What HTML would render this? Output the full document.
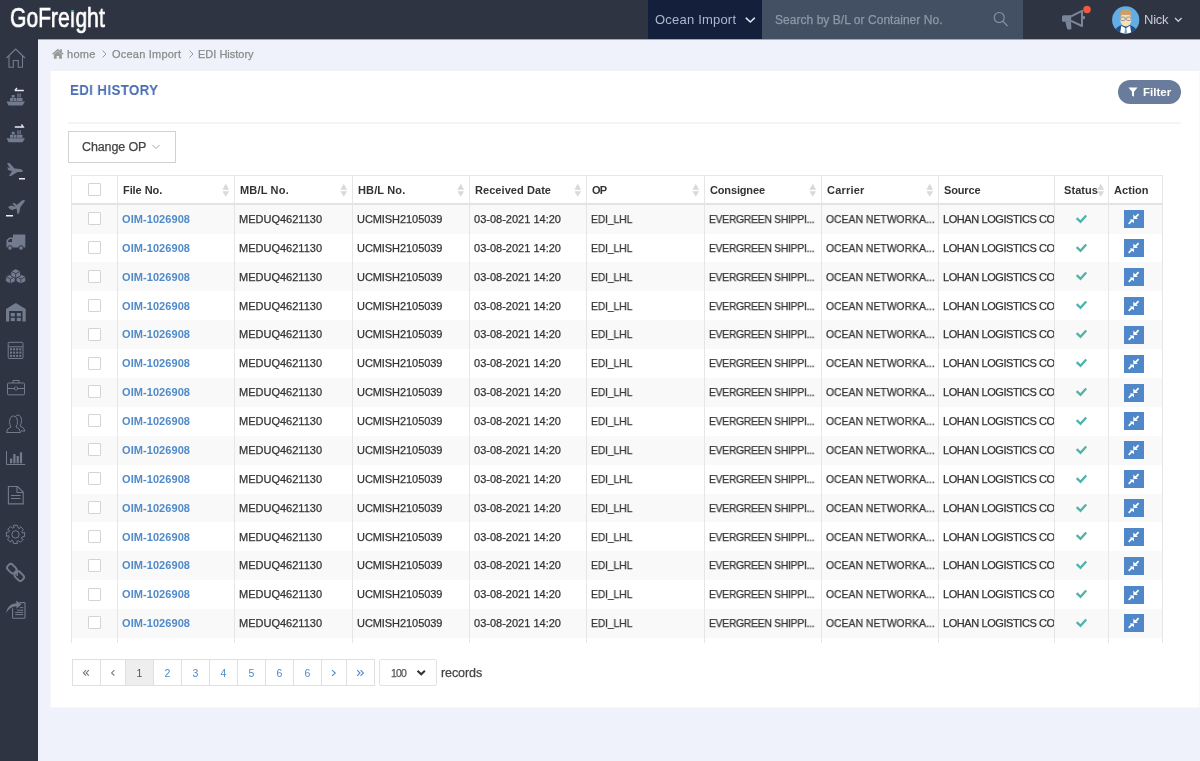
<!DOCTYPE html>
<html><head><meta charset="utf-8">
<style>
*{box-sizing:border-box;margin:0;padding:0}
html,body{width:1200px;height:761px;overflow:hidden;background:#eff2fa;font-family:"Liberation Sans",sans-serif;color:#333}
.a{position:absolute}
.x{position:absolute;white-space:pre;line-height:normal;will-change:transform}
</style></head><body>

<div class="a" style="left:0;top:0;width:1200px;height:39px;background:#2e3442"></div>
<div class="a" style="left:0;top:39px;width:38px;height:722px;background:#2e3442"></div>
<div class="a" style="left:38px;top:39px;width:1162px;height:1px;background:#a3a8b4"></div>
<div class="x" style="left:10px;top:2.3px;font-size:27.5px;color:#fff;transform:scaleX(0.765);transform-origin:0 0;letter-spacing:0px;-webkit-text-stroke:0.7px #fff">GoFre&#305;ght</div>
<div class="a" style="left:71.3px;top:9.6px;width:2.6px;height:2.6px;border-radius:2px;background:#3cc0b0"></div>
<div class="a" style="left:648px;top:0;width:114px;height:39px;background:#131f3b"></div>
<div class="a" style="left:762px;top:0;width:261px;height:39px;background:#434f63"></div>
<svg class="a" style="left:740px;top:10.5px" width="20" height="20"><path d="M6.2 7.2 L10.3 11 L14.4 7.2" fill="none" stroke="#dfe3ea" stroke-width="1.6" stroke-linecap="round"/></svg>
<svg class="a" style="left:1170px;top:10px" width="16" height="16"><path d="M5 8 L8.3 11.3 L11.6 8" fill="none" stroke="#c8cdd8" stroke-width="1.3"/></svg>
<svg class="a" style="left:990px;top:8px" width="22" height="22"><circle cx="9.2" cy="9.5" r="5" fill="none" stroke="#8b95a6" stroke-width="1.1"/><path d="M12.8 13.1 L17.5 18" stroke="#8b95a6" stroke-width="1.1"/></svg>
<svg class="a" style="left:1058px;top:4px" width="34" height="30"><path d="M5.5 11.3 H13.2 V17.7 H5.5 Q4 17.7 4 16.2 V12.8 Q4 11.3 5.5 11.3 Z" fill="#7b8598"/><path d="M7.3 17.5 H13 L13.4 24.3 Q13.5 25.6 12.3 25.6 H10.2 Q9.2 25.6 9 24.6 Z" fill="#7b8598"/><path d="M13 12.3 L24 6.8 V22 L13 16.8" fill="none" stroke="#7b8598" stroke-width="2" stroke-linejoin="round"/><rect x="24.5" y="12" width="2.5" height="3.2" rx="1" fill="#7b8598"/><circle cx="29" cy="5.5" r="3.8" fill="#ee5a3b"/></svg>
<svg class="a" style="left:1111px;top:5px" width="30" height="30" viewBox="0 0 30 30"><defs><clipPath id="cc"><circle cx="14.7" cy="14.9" r="13.6"/></clipPath></defs><circle cx="14.7" cy="14.9" r="13.6" fill="#62ade6"/><g clip-path="url(#cc)"><path d="M2 30 Q4 22.3 10 20.3 L19.5 20.3 Q25.5 22.3 27.5 30 Z" fill="#1d4f8c"/><path d="M8.8 30 L10.3 20.8 L14.7 23.3 L19.1 20.8 L20.6 30 Z" fill="#ffffff"/><path d="M14 23 H15.4 L16.1 30 H13.3 Z" fill="#5aa6df"/><ellipse cx="14.8" cy="14.6" rx="5.6" ry="7" fill="#f8dfb4"/><path d="M8.7 15.5 Q7.6 3.8 14.8 4 Q22 3.8 20.9 15.5 Q20.6 11 19.6 9.6 Q15 10.6 10 9.6 Q9 11 8.7 15.5 Z" fill="#c9a06a"/><rect x="9.6" y="12.1" width="4.5" height="3.4" rx="1.2" fill="none" stroke="#8b9099" stroke-width="0.95"/><rect x="15.5" y="12.1" width="4.5" height="3.4" rx="1.2" fill="none" stroke="#8b9099" stroke-width="0.95"/><path d="M14 13.4 H15.6" stroke="#8b9099" stroke-width="0.8"/></g></svg>
<svg class="a" style="left:51px;top:47px" width="15" height="14" viewBox="0 0 15 14"><path d="M1.6 7.3 L6.9 2.7 L12.2 7.3" fill="none" stroke="#999" stroke-width="1.5"/><path d="M2.9 7.4 L6.9 4.1 L10.9 7.4 V11.7 H8.1 V9.1 H5.7 V11.7 H2.9 Z" fill="#999"/><rect x="9.2" y="2.2" width="1.7" height="3.2" fill="#999"/></svg>
<svg class="a" style="left:101px;top:49px" width="7" height="10"><path d="M1.5 1.5 L5 5 L1.5 8.5" fill="none" stroke="#999" stroke-width="1"/></svg>
<svg class="a" style="left:187.5px;top:49px" width="7" height="10"><path d="M1.5 1.5 L5 5 L1.5 8.5" fill="none" stroke="#999" stroke-width="1"/></svg>
<div class="a" style="left:50px;top:71px;width:1150px;height:637px;background:#f7f8fc"></div>
<div class="a" style="left:51px;top:71px;width:1148px;height:636px;background:#fff"></div>
<div class="a" style="left:1118px;top:80px;width:63px;height:24px;border-radius:12px;background:#6a7c9b"></div>
<svg class="a" style="left:1127px;top:86px" width="12" height="12"><path d="M1.5 1.5 H10.5 L7 5.8 V10.8 L5 9.6 V5.8 Z" fill="#fff"/></svg>
<div class="a" style="left:68px;top:122px;width:1113px;height:2px;background:#f4f4f4"></div>
<div class="a" style="left:68px;top:131px;width:108px;height:32px;border:1px solid #d2d2d2"></div>
<svg class="a" style="left:151px;top:143px" width="10" height="8"><path d="M1.5 2 L5 5.5 L8.5 2" fill="none" stroke="#9a9a9a" stroke-width="0.9"/></svg>
<div class="a" style="left:71px;top:205px;width:1091px;height:29px;background:#f9f9f9"></div>
<div class="a" style="left:71px;top:234px;width:1091px;height:28px;background:#ffffff"></div>
<div class="a" style="left:71px;top:262px;width:1091px;height:29px;background:#f9f9f9"></div>
<div class="a" style="left:71px;top:291px;width:1091px;height:29px;background:#ffffff"></div>
<div class="a" style="left:71px;top:320px;width:1091px;height:29px;background:#f9f9f9"></div>
<div class="a" style="left:71px;top:349px;width:1091px;height:29px;background:#ffffff"></div>
<div class="a" style="left:71px;top:378px;width:1091px;height:29px;background:#f9f9f9"></div>
<div class="a" style="left:71px;top:407px;width:1091px;height:29px;background:#ffffff"></div>
<div class="a" style="left:71px;top:436px;width:1091px;height:29px;background:#f9f9f9"></div>
<div class="a" style="left:71px;top:465px;width:1091px;height:29px;background:#ffffff"></div>
<div class="a" style="left:71px;top:494px;width:1091px;height:28px;background:#f9f9f9"></div>
<div class="a" style="left:71px;top:522px;width:1091px;height:29px;background:#ffffff"></div>
<div class="a" style="left:71px;top:551px;width:1091px;height:29px;background:#f9f9f9"></div>
<div class="a" style="left:71px;top:580px;width:1091px;height:29px;background:#ffffff"></div>
<div class="a" style="left:71px;top:609px;width:1091px;height:29px;background:#f9f9f9"></div>
<div class="a" style="left:71px;top:638px;width:1091px;height:5px;background:#ffffff"></div>
<div class="a" style="left:71px;top:175px;width:1092px;height:1px;background:#e8e8e8"></div>
<div class="a" style="left:71px;top:203px;width:1092px;height:2px;background:#e3e3e3"></div>
<div class="a" style="left:71px;top:175px;width:1px;height:468px;background:#e6e6e6"></div>
<div class="a" style="left:117px;top:175px;width:1px;height:468px;background:#e6e6e6"></div>
<div class="a" style="left:234px;top:175px;width:1px;height:468px;background:#e6e6e6"></div>
<div class="a" style="left:352px;top:175px;width:1px;height:468px;background:#e6e6e6"></div>
<div class="a" style="left:469px;top:175px;width:1px;height:468px;background:#e6e6e6"></div>
<div class="a" style="left:586px;top:175px;width:1px;height:468px;background:#e6e6e6"></div>
<div class="a" style="left:704px;top:175px;width:1px;height:468px;background:#e6e6e6"></div>
<div class="a" style="left:821px;top:175px;width:1px;height:468px;background:#e6e6e6"></div>
<div class="a" style="left:938px;top:175px;width:1px;height:468px;background:#e6e6e6"></div>
<div class="a" style="left:1054px;top:175px;width:1px;height:468px;background:#e6e6e6"></div>
<div class="a" style="left:1108px;top:175px;width:1px;height:468px;background:#e6e6e6"></div>
<div class="a" style="left:1162px;top:175px;width:1px;height:468px;background:#e6e6e6"></div>
<div class="a" style="left:88px;top:183px;width:13px;height:13px;border:1px solid #d4d4d4;border-radius:1px;background:#fff"></div>
<div class="a" style="left:88px;top:212px;width:13px;height:13px;border:1px solid #d4d4d4;border-radius:1px;background:#fff"></div>
<div class="a" style="left:88px;top:241px;width:13px;height:13px;border:1px solid #d4d4d4;border-radius:1px;background:#fff"></div>
<div class="a" style="left:88px;top:270px;width:13px;height:13px;border:1px solid #d4d4d4;border-radius:1px;background:#fff"></div>
<div class="a" style="left:88px;top:299px;width:13px;height:13px;border:1px solid #d4d4d4;border-radius:1px;background:#fff"></div>
<div class="a" style="left:88px;top:328px;width:13px;height:13px;border:1px solid #d4d4d4;border-radius:1px;background:#fff"></div>
<div class="a" style="left:88px;top:357px;width:13px;height:13px;border:1px solid #d4d4d4;border-radius:1px;background:#fff"></div>
<div class="a" style="left:88px;top:385px;width:13px;height:13px;border:1px solid #d4d4d4;border-radius:1px;background:#fff"></div>
<div class="a" style="left:88px;top:414px;width:13px;height:13px;border:1px solid #d4d4d4;border-radius:1px;background:#fff"></div>
<div class="a" style="left:88px;top:443px;width:13px;height:13px;border:1px solid #d4d4d4;border-radius:1px;background:#fff"></div>
<div class="a" style="left:88px;top:472px;width:13px;height:13px;border:1px solid #d4d4d4;border-radius:1px;background:#fff"></div>
<div class="a" style="left:88px;top:501px;width:13px;height:13px;border:1px solid #d4d4d4;border-radius:1px;background:#fff"></div>
<div class="a" style="left:88px;top:530px;width:13px;height:13px;border:1px solid #d4d4d4;border-radius:1px;background:#fff"></div>
<div class="a" style="left:88px;top:559px;width:13px;height:13px;border:1px solid #d4d4d4;border-radius:1px;background:#fff"></div>
<div class="a" style="left:88px;top:588px;width:13px;height:13px;border:1px solid #d4d4d4;border-radius:1px;background:#fff"></div>
<div class="a" style="left:88px;top:616px;width:13px;height:13px;border:1px solid #d4d4d4;border-radius:1px;background:#fff"></div>
<svg class="a" style="left:222.0px;top:183px" width="8" height="15"><path d="M0.4 6.8 L3.75 0.8 L7.1 6.8 Z M0.4 8.2 H7.1 L3.75 13.8 Z" fill="#d9d9d9"/></svg>
<svg class="a" style="left:340.0px;top:183px" width="8" height="15"><path d="M0.4 6.8 L3.75 0.8 L7.1 6.8 Z M0.4 8.2 H7.1 L3.75 13.8 Z" fill="#d9d9d9"/></svg>
<svg class="a" style="left:457.0px;top:183px" width="8" height="15"><path d="M0.4 6.8 L3.75 0.8 L7.1 6.8 Z M0.4 8.2 H7.1 L3.75 13.8 Z" fill="#d9d9d9"/></svg>
<svg class="a" style="left:574.0px;top:183px" width="8" height="15"><path d="M0.4 6.8 L3.75 0.8 L7.1 6.8 Z M0.4 8.2 H7.1 L3.75 13.8 Z" fill="#d9d9d9"/></svg>
<svg class="a" style="left:692.0px;top:183px" width="8" height="15"><path d="M0.4 6.8 L3.75 0.8 L7.1 6.8 Z M0.4 8.2 H7.1 L3.75 13.8 Z" fill="#d9d9d9"/></svg>
<svg class="a" style="left:809.0px;top:183px" width="8" height="15"><path d="M0.4 6.8 L3.75 0.8 L7.1 6.8 Z M0.4 8.2 H7.1 L3.75 13.8 Z" fill="#d9d9d9"/></svg>
<svg class="a" style="left:926.0px;top:183px" width="8" height="15"><path d="M0.4 6.8 L3.75 0.8 L7.1 6.8 Z M0.4 8.2 H7.1 L3.75 13.8 Z" fill="#d9d9d9"/></svg>
<svg class="a" style="left:1096.5px;top:183px" width="8" height="15"><path d="M0.4 6.8 L3.75 0.8 L7.1 6.8 Z M0.4 8.2 H7.1 L3.75 13.8 Z" fill="#d9d9d9"/></svg>
<svg class="a" style="left:1074px;top:211px" width="15" height="14"><path d="M2.7 7.2 L6.5 10.8 L12.2 4.5" fill="none" stroke="#4fb3aa" stroke-width="2.3"/></svg>
<div class="a" style="left:1124px;top:210px;width:20px;height:18px;background:#5087c9"></div>
<svg class="a" style="left:1124px;top:210px" width="20" height="18"><path d="M14.6 4.2 L11 7.8" stroke="#fff" stroke-width="1.7"/><path d="M9.3 9.1 V4.6 L13.9 9.1 Z" fill="#fff"/><path d="M4.7 13.8 L8.3 10.2" stroke="#fff" stroke-width="1.7"/><path d="M10 9.4 V13.2 L5.6 9.4 Z" fill="#fff"/></svg>
<svg class="a" style="left:1074px;top:240px" width="15" height="14"><path d="M2.7 7.2 L6.5 10.8 L12.2 4.5" fill="none" stroke="#4fb3aa" stroke-width="2.3"/></svg>
<div class="a" style="left:1124px;top:239px;width:20px;height:18px;background:#5087c9"></div>
<svg class="a" style="left:1124px;top:239px" width="20" height="18"><path d="M14.6 4.2 L11 7.8" stroke="#fff" stroke-width="1.7"/><path d="M9.3 9.1 V4.6 L13.9 9.1 Z" fill="#fff"/><path d="M4.7 13.8 L8.3 10.2" stroke="#fff" stroke-width="1.7"/><path d="M10 9.4 V13.2 L5.6 9.4 Z" fill="#fff"/></svg>
<svg class="a" style="left:1074px;top:268px" width="15" height="14"><path d="M2.7 7.2 L6.5 10.8 L12.2 4.5" fill="none" stroke="#4fb3aa" stroke-width="2.3"/></svg>
<div class="a" style="left:1124px;top:268px;width:20px;height:18px;background:#5087c9"></div>
<svg class="a" style="left:1124px;top:268px" width="20" height="18"><path d="M14.6 4.2 L11 7.8" stroke="#fff" stroke-width="1.7"/><path d="M9.3 9.1 V4.6 L13.9 9.1 Z" fill="#fff"/><path d="M4.7 13.8 L8.3 10.2" stroke="#fff" stroke-width="1.7"/><path d="M10 9.4 V13.2 L5.6 9.4 Z" fill="#fff"/></svg>
<svg class="a" style="left:1074px;top:297px" width="15" height="14"><path d="M2.7 7.2 L6.5 10.8 L12.2 4.5" fill="none" stroke="#4fb3aa" stroke-width="2.3"/></svg>
<div class="a" style="left:1124px;top:297px;width:20px;height:18px;background:#5087c9"></div>
<svg class="a" style="left:1124px;top:297px" width="20" height="18"><path d="M14.6 4.2 L11 7.8" stroke="#fff" stroke-width="1.7"/><path d="M9.3 9.1 V4.6 L13.9 9.1 Z" fill="#fff"/><path d="M4.7 13.8 L8.3 10.2" stroke="#fff" stroke-width="1.7"/><path d="M10 9.4 V13.2 L5.6 9.4 Z" fill="#fff"/></svg>
<svg class="a" style="left:1074px;top:326px" width="15" height="14"><path d="M2.7 7.2 L6.5 10.8 L12.2 4.5" fill="none" stroke="#4fb3aa" stroke-width="2.3"/></svg>
<div class="a" style="left:1124px;top:326px;width:20px;height:18px;background:#5087c9"></div>
<svg class="a" style="left:1124px;top:326px" width="20" height="18"><path d="M14.6 4.2 L11 7.8" stroke="#fff" stroke-width="1.7"/><path d="M9.3 9.1 V4.6 L13.9 9.1 Z" fill="#fff"/><path d="M4.7 13.8 L8.3 10.2" stroke="#fff" stroke-width="1.7"/><path d="M10 9.4 V13.2 L5.6 9.4 Z" fill="#fff"/></svg>
<svg class="a" style="left:1074px;top:355px" width="15" height="14"><path d="M2.7 7.2 L6.5 10.8 L12.2 4.5" fill="none" stroke="#4fb3aa" stroke-width="2.3"/></svg>
<div class="a" style="left:1124px;top:355px;width:20px;height:18px;background:#5087c9"></div>
<svg class="a" style="left:1124px;top:355px" width="20" height="18"><path d="M14.6 4.2 L11 7.8" stroke="#fff" stroke-width="1.7"/><path d="M9.3 9.1 V4.6 L13.9 9.1 Z" fill="#fff"/><path d="M4.7 13.8 L8.3 10.2" stroke="#fff" stroke-width="1.7"/><path d="M10 9.4 V13.2 L5.6 9.4 Z" fill="#fff"/></svg>
<svg class="a" style="left:1074px;top:384px" width="15" height="14"><path d="M2.7 7.2 L6.5 10.8 L12.2 4.5" fill="none" stroke="#4fb3aa" stroke-width="2.3"/></svg>
<div class="a" style="left:1124px;top:384px;width:20px;height:18px;background:#5087c9"></div>
<svg class="a" style="left:1124px;top:384px" width="20" height="18"><path d="M14.6 4.2 L11 7.8" stroke="#fff" stroke-width="1.7"/><path d="M9.3 9.1 V4.6 L13.9 9.1 Z" fill="#fff"/><path d="M4.7 13.8 L8.3 10.2" stroke="#fff" stroke-width="1.7"/><path d="M10 9.4 V13.2 L5.6 9.4 Z" fill="#fff"/></svg>
<svg class="a" style="left:1074px;top:413px" width="15" height="14"><path d="M2.7 7.2 L6.5 10.8 L12.2 4.5" fill="none" stroke="#4fb3aa" stroke-width="2.3"/></svg>
<div class="a" style="left:1124px;top:412px;width:20px;height:18px;background:#5087c9"></div>
<svg class="a" style="left:1124px;top:412px" width="20" height="18"><path d="M14.6 4.2 L11 7.8" stroke="#fff" stroke-width="1.7"/><path d="M9.3 9.1 V4.6 L13.9 9.1 Z" fill="#fff"/><path d="M4.7 13.8 L8.3 10.2" stroke="#fff" stroke-width="1.7"/><path d="M10 9.4 V13.2 L5.6 9.4 Z" fill="#fff"/></svg>
<svg class="a" style="left:1074px;top:442px" width="15" height="14"><path d="M2.7 7.2 L6.5 10.8 L12.2 4.5" fill="none" stroke="#4fb3aa" stroke-width="2.3"/></svg>
<div class="a" style="left:1124px;top:441px;width:20px;height:18px;background:#5087c9"></div>
<svg class="a" style="left:1124px;top:441px" width="20" height="18"><path d="M14.6 4.2 L11 7.8" stroke="#fff" stroke-width="1.7"/><path d="M9.3 9.1 V4.6 L13.9 9.1 Z" fill="#fff"/><path d="M4.7 13.8 L8.3 10.2" stroke="#fff" stroke-width="1.7"/><path d="M10 9.4 V13.2 L5.6 9.4 Z" fill="#fff"/></svg>
<svg class="a" style="left:1074px;top:471px" width="15" height="14"><path d="M2.7 7.2 L6.5 10.8 L12.2 4.5" fill="none" stroke="#4fb3aa" stroke-width="2.3"/></svg>
<div class="a" style="left:1124px;top:470px;width:20px;height:18px;background:#5087c9"></div>
<svg class="a" style="left:1124px;top:470px" width="20" height="18"><path d="M14.6 4.2 L11 7.8" stroke="#fff" stroke-width="1.7"/><path d="M9.3 9.1 V4.6 L13.9 9.1 Z" fill="#fff"/><path d="M4.7 13.8 L8.3 10.2" stroke="#fff" stroke-width="1.7"/><path d="M10 9.4 V13.2 L5.6 9.4 Z" fill="#fff"/></svg>
<svg class="a" style="left:1074px;top:500px" width="15" height="14"><path d="M2.7 7.2 L6.5 10.8 L12.2 4.5" fill="none" stroke="#4fb3aa" stroke-width="2.3"/></svg>
<div class="a" style="left:1124px;top:499px;width:20px;height:18px;background:#5087c9"></div>
<svg class="a" style="left:1124px;top:499px" width="20" height="18"><path d="M14.6 4.2 L11 7.8" stroke="#fff" stroke-width="1.7"/><path d="M9.3 9.1 V4.6 L13.9 9.1 Z" fill="#fff"/><path d="M4.7 13.8 L8.3 10.2" stroke="#fff" stroke-width="1.7"/><path d="M10 9.4 V13.2 L5.6 9.4 Z" fill="#fff"/></svg>
<svg class="a" style="left:1074px;top:528px" width="15" height="14"><path d="M2.7 7.2 L6.5 10.8 L12.2 4.5" fill="none" stroke="#4fb3aa" stroke-width="2.3"/></svg>
<div class="a" style="left:1124px;top:528px;width:20px;height:18px;background:#5087c9"></div>
<svg class="a" style="left:1124px;top:528px" width="20" height="18"><path d="M14.6 4.2 L11 7.8" stroke="#fff" stroke-width="1.7"/><path d="M9.3 9.1 V4.6 L13.9 9.1 Z" fill="#fff"/><path d="M4.7 13.8 L8.3 10.2" stroke="#fff" stroke-width="1.7"/><path d="M10 9.4 V13.2 L5.6 9.4 Z" fill="#fff"/></svg>
<svg class="a" style="left:1074px;top:557px" width="15" height="14"><path d="M2.7 7.2 L6.5 10.8 L12.2 4.5" fill="none" stroke="#4fb3aa" stroke-width="2.3"/></svg>
<div class="a" style="left:1124px;top:557px;width:20px;height:18px;background:#5087c9"></div>
<svg class="a" style="left:1124px;top:557px" width="20" height="18"><path d="M14.6 4.2 L11 7.8" stroke="#fff" stroke-width="1.7"/><path d="M9.3 9.1 V4.6 L13.9 9.1 Z" fill="#fff"/><path d="M4.7 13.8 L8.3 10.2" stroke="#fff" stroke-width="1.7"/><path d="M10 9.4 V13.2 L5.6 9.4 Z" fill="#fff"/></svg>
<svg class="a" style="left:1074px;top:586px" width="15" height="14"><path d="M2.7 7.2 L6.5 10.8 L12.2 4.5" fill="none" stroke="#4fb3aa" stroke-width="2.3"/></svg>
<div class="a" style="left:1124px;top:586px;width:20px;height:18px;background:#5087c9"></div>
<svg class="a" style="left:1124px;top:586px" width="20" height="18"><path d="M14.6 4.2 L11 7.8" stroke="#fff" stroke-width="1.7"/><path d="M9.3 9.1 V4.6 L13.9 9.1 Z" fill="#fff"/><path d="M4.7 13.8 L8.3 10.2" stroke="#fff" stroke-width="1.7"/><path d="M10 9.4 V13.2 L5.6 9.4 Z" fill="#fff"/></svg>
<svg class="a" style="left:1074px;top:615px" width="15" height="14"><path d="M2.7 7.2 L6.5 10.8 L12.2 4.5" fill="none" stroke="#4fb3aa" stroke-width="2.3"/></svg>
<div class="a" style="left:1124px;top:614px;width:20px;height:18px;background:#5087c9"></div>
<svg class="a" style="left:1124px;top:614px" width="20" height="18"><path d="M14.6 4.2 L11 7.8" stroke="#fff" stroke-width="1.7"/><path d="M9.3 9.1 V4.6 L13.9 9.1 Z" fill="#fff"/><path d="M4.7 13.8 L8.3 10.2" stroke="#fff" stroke-width="1.7"/><path d="M10 9.4 V13.2 L5.6 9.4 Z" fill="#fff"/></svg>
<div class="a" style="left:72px;top:659px;width:29px;height:27px;border:1px solid #e0e0e0;background:#fff"></div>
<div class="a" style="left:100px;top:659px;width:26px;height:27px;border:1px solid #e0e0e0;background:#fff"></div>
<div class="a" style="left:125px;top:659px;width:29px;height:27px;border:1px solid #e0e0e0;background:#eeeeee"></div>
<div class="x" style="left:125px;top:667px;width:29px;text-align:center;font-size:10.5px;color:#555">1</div>
<div class="a" style="left:153px;top:659px;width:29px;height:27px;border:1px solid #e0e0e0;background:#fff"></div>
<div class="x" style="left:153px;top:667px;width:29px;text-align:center;font-size:10.5px;color:#508ac9">2</div>
<div class="a" style="left:181px;top:659px;width:29px;height:27px;border:1px solid #e0e0e0;background:#fff"></div>
<div class="x" style="left:181px;top:667px;width:29px;text-align:center;font-size:10.5px;color:#508ac9">3</div>
<div class="a" style="left:209px;top:659px;width:29px;height:27px;border:1px solid #e0e0e0;background:#fff"></div>
<div class="x" style="left:209px;top:667px;width:29px;text-align:center;font-size:10.5px;color:#508ac9">4</div>
<div class="a" style="left:237px;top:659px;width:29px;height:27px;border:1px solid #e0e0e0;background:#fff"></div>
<div class="x" style="left:237px;top:667px;width:29px;text-align:center;font-size:10.5px;color:#508ac9">5</div>
<div class="a" style="left:265px;top:659px;width:29px;height:27px;border:1px solid #e0e0e0;background:#fff"></div>
<div class="x" style="left:265px;top:667px;width:29px;text-align:center;font-size:10.5px;color:#508ac9">6</div>
<div class="a" style="left:293px;top:659px;width:29px;height:27px;border:1px solid #e0e0e0;background:#fff"></div>
<div class="x" style="left:293px;top:667px;width:29px;text-align:center;font-size:10.5px;color:#508ac9">6</div>
<div class="a" style="left:321px;top:659px;width:26px;height:27px;border:1px solid #e0e0e0;background:#fff"></div>
<div class="a" style="left:346px;top:659px;width:29px;height:27px;border:1px solid #e0e0e0;background:#fff"></div>
<svg class="a" style="left:0;top:650px" width="400" height="40"><path d="M86 20.2 L83.4 22.9 L86 25.6 M88.8 20.2 L86.2 22.9 L88.8 25.6" fill="none" stroke="#777" stroke-width="1.1"/><path d="M114.4 20.2 L111.6 22.9 L114.4 25.6" fill="none" stroke="#777" stroke-width="1.1"/><path d="M332 20.2 L335.3 23 L332 25.8" fill="none" stroke="#508ac9" stroke-width="1.1"/><path d="M357.2 20.2 L360 23 L357.2 25.8 M360.6 20.2 L363.4 23 L360.6 25.8" fill="none" stroke="#508ac9" stroke-width="1.1"/></svg>
<div class="a" style="left:379px;top:659px;width:58px;height:27px;border:1px solid #e3e3e3;border-radius:2px;background:#fff"></div>
<svg class="a" style="left:415px;top:668px" width="12" height="10"><path d="M2.5 2.8 L6.2 6.3 L9.9 2.8" fill="none" stroke="#333" stroke-width="2"/></svg>
<svg class="a" style="left:0;top:0" width="38" height="761"><path d="M6.5 58 L15.7 49 L25 58" fill="none" stroke="#737c8e" stroke-width="1.1"/><path d="M9 56 V67.3 H13.3 V60.5 H18.3 V67.3 H22.5 V56" fill="none" stroke="#737c8e" stroke-width="1.1"/><path d="M14.8 90.5 H23.8 M14.8 90.5 L17 88" fill="none" stroke="#e8eaee" stroke-width="1.3"/><path d="M6.5 101.5 H25 L22.5 105.5 H8.5 Z" fill="#737c8e"/><rect x="10" y="98.0" width="3" height="3" fill="#737c8e"/><rect x="13.5" y="98.0" width="3" height="3" fill="#737c8e"/><rect x="11.7" y="95.0" width="3" height="2.6" fill="#737c8e"/><rect x="17.3" y="93.5" width="1.3" height="4" fill="#737c8e"/><rect x="19.5" y="93.5" width="1.3" height="4" fill="#737c8e"/><rect x="17" y="98.0" width="5.5" height="3" fill="#737c8e"/><path d="M14.8 127 H23.3 L21.5 124.5" fill="none" stroke="#e8eaee" stroke-width="1.3"/><path d="M6.5 138.3 H25 L22.5 142.3 H8.5 Z" fill="#737c8e"/><rect x="10" y="134.8" width="3" height="3" fill="#737c8e"/><rect x="13.5" y="134.8" width="3" height="3" fill="#737c8e"/><rect x="11.7" y="131.8" width="3" height="2.6" fill="#737c8e"/><rect x="17.3" y="130.3" width="1.3" height="4" fill="#737c8e"/><rect x="19.5" y="130.3" width="1.3" height="4" fill="#737c8e"/><rect x="17" y="134.8" width="5.5" height="3" fill="#737c8e"/><path d="M7 163 L9.5 163 L14.5 168.5 L20 169 Q23.5 170 22.5 172 L17.5 172 L11 176 L9 176 L12 171 L8 170 L7.5 167 L10 168.5 Z" fill="#737c8e"/><rect x="19" y="178" width="6" height="1.5" fill="#eceef2"/><path d="M8 207 L11 205.5 L15 206.5 L22 200.5 Q24.5 199.5 25 201 L20.5 207 L19 213.5 L17.5 214 L16.5 208.5 L12 210 Q9.5 209.5 8 207 Z M12 203.5 L14.5 203 L17 205 L15.5 206.5 Z" fill="#737c8e"/><rect x="6" y="215" width="7" height="1.5" fill="#eceef2"/><path d="M13 234.5 H25.3 V247.5 H13 Z" fill="#737c8e"/><path d="M6.5 240 L9.5 237.5 H13 V247.5 H6.5 Z" fill="#737c8e"/><path d="M8 241 L10 239 H12 V242 H8 Z" fill="#2e3442"/><circle cx="10" cy="248" r="2.3" fill="#737c8e" stroke="#2e3442" stroke-width="1"/><circle cx="21" cy="248" r="2.3" fill="#737c8e" stroke="#2e3442" stroke-width="1"/><path d="M10.5 274.2 L15.3 276.6 L15.3 281.4 L10.5 283.8 L5.7 281.4 L5.7 276.6 Z" fill="#737c8e" stroke="#2e3442" stroke-width="0.8"/><path d="M5.7 276.6 L10.5 279 L15.3 276.6 M10.5 279 V283.8" fill="none" stroke="#2e3442" stroke-width="0.8"/><path d="M20.9 274.2 L25.7 276.6 L25.7 281.4 L20.9 283.8 L16.099999999999998 281.4 L16.099999999999998 276.6 Z" fill="#737c8e" stroke="#2e3442" stroke-width="0.8"/><path d="M16.099999999999998 276.6 L20.9 279 L25.7 276.6 M20.9 279 V283.8" fill="none" stroke="#2e3442" stroke-width="0.8"/><path d="M15.7 268.8 L20.5 271.20000000000005 L20.5 276.0 L15.7 278.40000000000003 L10.899999999999999 276.0 L10.899999999999999 271.20000000000005 Z" fill="#737c8e" stroke="#2e3442" stroke-width="0.8"/><path d="M10.899999999999999 271.20000000000005 L15.7 273.6 L20.5 271.20000000000005 M15.7 273.6 V278.40000000000003" fill="none" stroke="#2e3442" stroke-width="0.8"/><path d="M6 309 L15.8 303 L25.7 309 V321.6 H22.5 V311 H9.2 V321.6 H6 Z" fill="#737c8e"/><rect x="10.8" y="313" width="4" height="3.3" fill="#737c8e"/><rect x="16.8" y="313" width="4" height="3.3" fill="#737c8e"/><rect x="10.8" y="317.8" width="4" height="3.3" fill="#737c8e"/><rect x="16.8" y="317.8" width="4" height="3.3" fill="#737c8e"/><rect x="8.2" y="342.3" width="14.8" height="16.2" rx="0.8" fill="none" stroke="#737c8e" stroke-width="1"/><path d="M8.5 346.8 H22.8" stroke="#737c8e" stroke-width="1"/><rect x="10.0" y="348.3" width="2" height="2" fill="#737c8e"/><rect x="13.1" y="348.3" width="2" height="2" fill="#737c8e"/><rect x="16.2" y="348.3" width="2" height="2" fill="#737c8e"/><rect x="19.3" y="348.3" width="2" height="2" fill="#737c8e"/><rect x="10.0" y="351.6" width="2" height="2" fill="#737c8e"/><rect x="13.1" y="351.6" width="2" height="2" fill="#737c8e"/><rect x="16.2" y="351.6" width="2" height="2" fill="#737c8e"/><rect x="19.3" y="351.6" width="2" height="2" fill="#737c8e"/><rect x="10.0" y="354.90000000000003" width="2" height="2" fill="#737c8e"/><rect x="13.1" y="354.90000000000003" width="2" height="2" fill="#737c8e"/><rect x="16.2" y="354.90000000000003" width="2" height="2" fill="#737c8e"/><rect x="19.3" y="354.90000000000003" width="2" height="2" fill="#737c8e"/><rect x="7.5" y="383" width="17" height="11.8" rx="1" fill="none" stroke="#737c8e" stroke-width="1"/><path d="M13 383 V380.5 H19 V383" fill="none" stroke="#737c8e" stroke-width="1"/><path d="M7.5 388.5 H24.5" stroke="#737c8e" stroke-width="1"/><rect x="14.5" y="387" width="3" height="3" rx="1" fill="#2e3442" stroke="#737c8e" stroke-width="0.9"/><path d="M6.5 432.5 Q7 428 11 427 Q9.5 425 9.5 421.5 Q10 416 13.5 416 Q17 416 17.5 421.5 Q17.5 425 16 427 Q20 428 20.5 432.5 Z" fill="none" stroke="#737c8e" stroke-width="1"/><path d="M15.5 416.5 Q16.5 415 18 415 Q21.5 415.5 21.5 420.5 Q21.5 424 20 426 Q24 427 25 431 H21" fill="none" stroke="#737c8e" stroke-width="1"/><path d="M6.5 451 V464.5 H25.2" fill="none" stroke="#737c8e" stroke-width="1"/><rect x="10" y="458.5" width="2.2" height="4.8" fill="#737c8e"/><rect x="13.3" y="454" width="2.2" height="9.3" fill="#737c8e"/><rect x="16.6" y="456" width="2.2" height="7.3" fill="#737c8e"/><rect x="19.9" y="452.3" width="2.2" height="11" fill="#737c8e"/><path d="M8.4 486.5 H17.5 L23.2 492 V503.9 H8.4 Z" fill="none" stroke="#737c8e" stroke-width="1.1"/><path d="M17 486.5 V492.5 H23" fill="none" stroke="#737c8e" stroke-width="1.1"/><path d="M11 495.5 H20.5 M11 498.5 H20.5" stroke="#737c8e" stroke-width="1.1"/><path d="M24.58 532.37 L24.58 536.43 L22.05 536.87 L21.28 538.35 L23.35 539.38 L20.48 542.25 L18.39 540.78 L16.79 541.28 L17.53 543.48 L13.47 543.48 L13.03 540.95 L11.55 540.18 L10.52 542.25 L7.65 539.38 L9.12 537.29 L8.62 535.69 L6.42 536.43 L6.42 532.37 L8.95 531.93 L9.72 530.45 L7.65 529.42 L10.52 526.55 L12.61 528.02 L14.21 527.52 L13.47 525.32 L17.53 525.32 L17.97 527.85 L19.45 528.62 L20.48 526.55 L23.35 529.42 L21.88 531.51 L22.38 533.11 Z" fill="none" stroke="#737c8e" stroke-width="1" stroke-linejoin="round"/><circle cx="15.5" cy="534.4" r="3.7" fill="none" stroke="#737c8e" stroke-width="1"/><g transform="rotate(-45 11.8 568.7)"><rect x="8.4" y="563.9" width="6.8" height="9.6" rx="2.6" fill="none" stroke="#737c8e" stroke-width="1.9"/></g><g transform="rotate(-45 19.3 576.2)"><rect x="15.9" y="571.4" width="6.8" height="9.6" rx="2.6" fill="none" stroke="#737c8e" stroke-width="1.9"/></g><path d="M13.6 572.4 L17.3 572.2 L17.1 575.9" fill="none" stroke="#737c8e" stroke-width="1.5"/><path d="M19.5 602.6 H24.2 Q25 602.6 25 603.4 V617.6 Q25 618.3 24.2 618.3 H13.3 Q12.6 618.3 12.6 617.6 V608.3" fill="none" stroke="#737c8e" stroke-width="1.1"/><path d="M19.8 607.6 H23.2 M17 610.2 H23.2 M15.2 612.4 H23.2 M15.2 614.6 H23.2" stroke="#737c8e" stroke-width="1"/><path d="M6.1 613 Q7.6 603.8 16.4 603.2 L16.3 600.5 L21.3 604.6 L16.5 608.8 L16.5 606.2 Q10.2 606.2 6.1 613 Z" fill="#737c8e"/></svg>
<div class="x" style="left:654.90px;top:12px;font-size:13px;font-weight:normal;color:#aeb8cd;letter-spacing:0.203px">Ocean Import</div>
<div class="x" style="left:775.00px;top:13px;font-size:12px;font-weight:normal;color:#8e98a9;letter-spacing:0.041px;-webkit-text-stroke:0.25px #8e98a9">Search by B/L or Container No.</div>
<div class="x" style="left:1143.75px;top:12px;font-size:13px;font-weight:normal;color:#c8cdd8;letter-spacing:-0.227px">Nick</div>
<div class="x" style="left:66.60px;top:48.4px;font-size:11px;font-weight:normal;color:#8a8a8a;letter-spacing:0.290px;-webkit-text-stroke:0.25px #8a8a8a">home</div>
<div class="x" style="left:112.40px;top:48.4px;font-size:11px;font-weight:normal;color:#8a8a8a;letter-spacing:0.214px;-webkit-text-stroke:0.25px #8a8a8a">Ocean Import</div>
<div class="x" style="left:198.40px;top:48.4px;font-size:11px;font-weight:normal;color:#8a8a8a;letter-spacing:-0.002px;-webkit-text-stroke:0.25px #8a8a8a">EDI History</div>
<div class="x" style="left:69.60px;top:80.5px;font-size:15.5px;font-weight:bold;color:#4b6db5;letter-spacing:0.414px;transform:scaleX(0.86);transform-origin:0 0">EDI HISTORY</div>
<div class="x" style="left:1142.75px;top:85.5px;font-size:11.5px;font-weight:bold;color:#ffffff;letter-spacing:0.015px">Filter</div>
<div class="x" style="left:81.60px;top:140px;font-size:12.5px;font-weight:normal;color:#444;letter-spacing:-0.116px;-webkit-text-stroke:0.25px #444">Change OP</div>
<div class="x" style="left:122.50px;top:184px;font-size:11px;font-weight:bold;color:#333;letter-spacing:-0.076px">File No.</div>
<div class="x" style="left:239.50px;top:184px;font-size:11px;font-weight:bold;color:#333;letter-spacing:0.176px">MB/L No.</div>
<div class="x" style="left:357.50px;top:184px;font-size:11px;font-weight:bold;color:#333;letter-spacing:0.136px">HB/L No.</div>
<div class="x" style="left:474.50px;top:184px;font-size:11px;font-weight:bold;color:#333;letter-spacing:0.065px">Received Date</div>
<div class="x" style="left:591.50px;top:184px;font-size:11px;font-weight:bold;color:#333;letter-spacing:-0.906px">OP</div>
<div class="x" style="left:709.50px;top:184px;font-size:11px;font-weight:bold;color:#333;letter-spacing:-0.154px">Consignee</div>
<div class="x" style="left:826.50px;top:184px;font-size:11px;font-weight:bold;color:#333;letter-spacing:0.220px">Carrier</div>
<div class="x" style="left:943.50px;top:184px;font-size:11px;font-weight:bold;color:#333;letter-spacing:-0.159px">Source</div>
<div class="x" style="left:1063.80px;top:184px;font-size:11px;font-weight:bold;color:#333;letter-spacing:0.075px">Status</div>
<div class="x" style="left:1113.50px;top:184px;font-size:11px;font-weight:bold;color:#333;letter-spacing:0.053px">Action</div>
<div class="x" style="left:121.80px;top:213px;font-size:11px;font-weight:bold;color:#508ac9;letter-spacing:0.073px;width:112.20px;overflow:hidden">OIM-1026908</div>
<div class="x" style="left:238.80px;top:213px;font-size:11px;font-weight:normal;color:#333;letter-spacing:0.004px;-webkit-text-stroke:0.25px #333;width:113.20px;overflow:hidden">MEDUQ4621130</div>
<div class="x" style="left:356.80px;top:213px;font-size:11px;font-weight:normal;color:#333;letter-spacing:-0.068px;-webkit-text-stroke:0.25px #333;width:112.20px;overflow:hidden">UCMISH2105039</div>
<div class="x" style="left:473.80px;top:213px;font-size:11px;font-weight:normal;color:#333;letter-spacing:0.009px;-webkit-text-stroke:0.25px #333;width:112.20px;overflow:hidden">03-08-2021 14:20</div>
<div class="x" style="left:590.80px;top:213px;font-size:11px;font-weight:normal;color:#333;letter-spacing:-0.100px;-webkit-text-stroke:0.25px #333;transform:scaleX(0.94);transform-origin:0 0;width:120.43px;overflow:hidden">EDI_LHL</div>
<div class="x" style="left:708.80px;top:213px;font-size:11px;font-weight:normal;color:#333;letter-spacing:-0.280px;-webkit-text-stroke:0.25px #333;transform:scaleX(0.94);transform-origin:0 0;width:119.36px;overflow:hidden">EVERGREEN SHIPPI...</div>
<div class="x" style="left:825.80px;top:213px;font-size:11px;font-weight:normal;color:#333;letter-spacing:0.052px;-webkit-text-stroke:0.25px #333;transform:scaleX(0.94);transform-origin:0 0;width:119.36px;overflow:hidden">OCEAN NETWORKA...</div>
<div class="x" style="left:942.80px;top:213px;font-size:11px;font-weight:normal;color:#333;letter-spacing:-0.417px;-webkit-text-stroke:0.25px #333;width:111.20px;overflow:hidden">LOHAN LOGISTICS CO</div>
<div class="x" style="left:121.80px;top:242px;font-size:11px;font-weight:bold;color:#508ac9;letter-spacing:0.073px;width:112.20px;overflow:hidden">OIM-1026908</div>
<div class="x" style="left:238.80px;top:242px;font-size:11px;font-weight:normal;color:#333;letter-spacing:0.004px;-webkit-text-stroke:0.25px #333;width:113.20px;overflow:hidden">MEDUQ4621130</div>
<div class="x" style="left:356.80px;top:242px;font-size:11px;font-weight:normal;color:#333;letter-spacing:-0.068px;-webkit-text-stroke:0.25px #333;width:112.20px;overflow:hidden">UCMISH2105039</div>
<div class="x" style="left:473.80px;top:242px;font-size:11px;font-weight:normal;color:#333;letter-spacing:0.009px;-webkit-text-stroke:0.25px #333;width:112.20px;overflow:hidden">03-08-2021 14:20</div>
<div class="x" style="left:590.80px;top:242px;font-size:11px;font-weight:normal;color:#333;letter-spacing:-0.100px;-webkit-text-stroke:0.25px #333;transform:scaleX(0.94);transform-origin:0 0;width:120.43px;overflow:hidden">EDI_LHL</div>
<div class="x" style="left:708.80px;top:242px;font-size:11px;font-weight:normal;color:#333;letter-spacing:-0.280px;-webkit-text-stroke:0.25px #333;transform:scaleX(0.94);transform-origin:0 0;width:119.36px;overflow:hidden">EVERGREEN SHIPPI...</div>
<div class="x" style="left:825.80px;top:242px;font-size:11px;font-weight:normal;color:#333;letter-spacing:0.052px;-webkit-text-stroke:0.25px #333;transform:scaleX(0.94);transform-origin:0 0;width:119.36px;overflow:hidden">OCEAN NETWORKA...</div>
<div class="x" style="left:942.80px;top:242px;font-size:11px;font-weight:normal;color:#333;letter-spacing:-0.417px;-webkit-text-stroke:0.25px #333;width:111.20px;overflow:hidden">LOHAN LOGISTICS CO</div>
<div class="x" style="left:121.80px;top:271px;font-size:11px;font-weight:bold;color:#508ac9;letter-spacing:0.073px;width:112.20px;overflow:hidden">OIM-1026908</div>
<div class="x" style="left:238.80px;top:271px;font-size:11px;font-weight:normal;color:#333;letter-spacing:0.004px;-webkit-text-stroke:0.25px #333;width:113.20px;overflow:hidden">MEDUQ4621130</div>
<div class="x" style="left:356.80px;top:271px;font-size:11px;font-weight:normal;color:#333;letter-spacing:-0.068px;-webkit-text-stroke:0.25px #333;width:112.20px;overflow:hidden">UCMISH2105039</div>
<div class="x" style="left:473.80px;top:271px;font-size:11px;font-weight:normal;color:#333;letter-spacing:0.009px;-webkit-text-stroke:0.25px #333;width:112.20px;overflow:hidden">03-08-2021 14:20</div>
<div class="x" style="left:590.80px;top:271px;font-size:11px;font-weight:normal;color:#333;letter-spacing:-0.100px;-webkit-text-stroke:0.25px #333;transform:scaleX(0.94);transform-origin:0 0;width:120.43px;overflow:hidden">EDI_LHL</div>
<div class="x" style="left:708.80px;top:271px;font-size:11px;font-weight:normal;color:#333;letter-spacing:-0.280px;-webkit-text-stroke:0.25px #333;transform:scaleX(0.94);transform-origin:0 0;width:119.36px;overflow:hidden">EVERGREEN SHIPPI...</div>
<div class="x" style="left:825.80px;top:271px;font-size:11px;font-weight:normal;color:#333;letter-spacing:0.052px;-webkit-text-stroke:0.25px #333;transform:scaleX(0.94);transform-origin:0 0;width:119.36px;overflow:hidden">OCEAN NETWORKA...</div>
<div class="x" style="left:942.80px;top:271px;font-size:11px;font-weight:normal;color:#333;letter-spacing:-0.417px;-webkit-text-stroke:0.25px #333;width:111.20px;overflow:hidden">LOHAN LOGISTICS CO</div>
<div class="x" style="left:121.80px;top:300px;font-size:11px;font-weight:bold;color:#508ac9;letter-spacing:0.073px;width:112.20px;overflow:hidden">OIM-1026908</div>
<div class="x" style="left:238.80px;top:300px;font-size:11px;font-weight:normal;color:#333;letter-spacing:0.004px;-webkit-text-stroke:0.25px #333;width:113.20px;overflow:hidden">MEDUQ4621130</div>
<div class="x" style="left:356.80px;top:300px;font-size:11px;font-weight:normal;color:#333;letter-spacing:-0.068px;-webkit-text-stroke:0.25px #333;width:112.20px;overflow:hidden">UCMISH2105039</div>
<div class="x" style="left:473.80px;top:300px;font-size:11px;font-weight:normal;color:#333;letter-spacing:0.009px;-webkit-text-stroke:0.25px #333;width:112.20px;overflow:hidden">03-08-2021 14:20</div>
<div class="x" style="left:590.80px;top:300px;font-size:11px;font-weight:normal;color:#333;letter-spacing:-0.100px;-webkit-text-stroke:0.25px #333;transform:scaleX(0.94);transform-origin:0 0;width:120.43px;overflow:hidden">EDI_LHL</div>
<div class="x" style="left:708.80px;top:300px;font-size:11px;font-weight:normal;color:#333;letter-spacing:-0.280px;-webkit-text-stroke:0.25px #333;transform:scaleX(0.94);transform-origin:0 0;width:119.36px;overflow:hidden">EVERGREEN SHIPPI...</div>
<div class="x" style="left:825.80px;top:300px;font-size:11px;font-weight:normal;color:#333;letter-spacing:0.052px;-webkit-text-stroke:0.25px #333;transform:scaleX(0.94);transform-origin:0 0;width:119.36px;overflow:hidden">OCEAN NETWORKA...</div>
<div class="x" style="left:942.80px;top:300px;font-size:11px;font-weight:normal;color:#333;letter-spacing:-0.417px;-webkit-text-stroke:0.25px #333;width:111.20px;overflow:hidden">LOHAN LOGISTICS CO</div>
<div class="x" style="left:121.80px;top:328px;font-size:11px;font-weight:bold;color:#508ac9;letter-spacing:0.073px;width:112.20px;overflow:hidden">OIM-1026908</div>
<div class="x" style="left:238.80px;top:328px;font-size:11px;font-weight:normal;color:#333;letter-spacing:0.004px;-webkit-text-stroke:0.25px #333;width:113.20px;overflow:hidden">MEDUQ4621130</div>
<div class="x" style="left:356.80px;top:328px;font-size:11px;font-weight:normal;color:#333;letter-spacing:-0.068px;-webkit-text-stroke:0.25px #333;width:112.20px;overflow:hidden">UCMISH2105039</div>
<div class="x" style="left:473.80px;top:328px;font-size:11px;font-weight:normal;color:#333;letter-spacing:0.009px;-webkit-text-stroke:0.25px #333;width:112.20px;overflow:hidden">03-08-2021 14:20</div>
<div class="x" style="left:590.80px;top:328px;font-size:11px;font-weight:normal;color:#333;letter-spacing:-0.100px;-webkit-text-stroke:0.25px #333;transform:scaleX(0.94);transform-origin:0 0;width:120.43px;overflow:hidden">EDI_LHL</div>
<div class="x" style="left:708.80px;top:328px;font-size:11px;font-weight:normal;color:#333;letter-spacing:-0.280px;-webkit-text-stroke:0.25px #333;transform:scaleX(0.94);transform-origin:0 0;width:119.36px;overflow:hidden">EVERGREEN SHIPPI...</div>
<div class="x" style="left:825.80px;top:328px;font-size:11px;font-weight:normal;color:#333;letter-spacing:0.052px;-webkit-text-stroke:0.25px #333;transform:scaleX(0.94);transform-origin:0 0;width:119.36px;overflow:hidden">OCEAN NETWORKA...</div>
<div class="x" style="left:942.80px;top:328px;font-size:11px;font-weight:normal;color:#333;letter-spacing:-0.417px;-webkit-text-stroke:0.25px #333;width:111.20px;overflow:hidden">LOHAN LOGISTICS CO</div>
<div class="x" style="left:121.80px;top:357px;font-size:11px;font-weight:bold;color:#508ac9;letter-spacing:0.073px;width:112.20px;overflow:hidden">OIM-1026908</div>
<div class="x" style="left:238.80px;top:357px;font-size:11px;font-weight:normal;color:#333;letter-spacing:0.004px;-webkit-text-stroke:0.25px #333;width:113.20px;overflow:hidden">MEDUQ4621130</div>
<div class="x" style="left:356.80px;top:357px;font-size:11px;font-weight:normal;color:#333;letter-spacing:-0.068px;-webkit-text-stroke:0.25px #333;width:112.20px;overflow:hidden">UCMISH2105039</div>
<div class="x" style="left:473.80px;top:357px;font-size:11px;font-weight:normal;color:#333;letter-spacing:0.009px;-webkit-text-stroke:0.25px #333;width:112.20px;overflow:hidden">03-08-2021 14:20</div>
<div class="x" style="left:590.80px;top:357px;font-size:11px;font-weight:normal;color:#333;letter-spacing:-0.100px;-webkit-text-stroke:0.25px #333;transform:scaleX(0.94);transform-origin:0 0;width:120.43px;overflow:hidden">EDI_LHL</div>
<div class="x" style="left:708.80px;top:357px;font-size:11px;font-weight:normal;color:#333;letter-spacing:-0.280px;-webkit-text-stroke:0.25px #333;transform:scaleX(0.94);transform-origin:0 0;width:119.36px;overflow:hidden">EVERGREEN SHIPPI...</div>
<div class="x" style="left:825.80px;top:357px;font-size:11px;font-weight:normal;color:#333;letter-spacing:0.052px;-webkit-text-stroke:0.25px #333;transform:scaleX(0.94);transform-origin:0 0;width:119.36px;overflow:hidden">OCEAN NETWORKA...</div>
<div class="x" style="left:942.80px;top:357px;font-size:11px;font-weight:normal;color:#333;letter-spacing:-0.417px;-webkit-text-stroke:0.25px #333;width:111.20px;overflow:hidden">LOHAN LOGISTICS CO</div>
<div class="x" style="left:121.80px;top:386px;font-size:11px;font-weight:bold;color:#508ac9;letter-spacing:0.073px;width:112.20px;overflow:hidden">OIM-1026908</div>
<div class="x" style="left:238.80px;top:386px;font-size:11px;font-weight:normal;color:#333;letter-spacing:0.004px;-webkit-text-stroke:0.25px #333;width:113.20px;overflow:hidden">MEDUQ4621130</div>
<div class="x" style="left:356.80px;top:386px;font-size:11px;font-weight:normal;color:#333;letter-spacing:-0.068px;-webkit-text-stroke:0.25px #333;width:112.20px;overflow:hidden">UCMISH2105039</div>
<div class="x" style="left:473.80px;top:386px;font-size:11px;font-weight:normal;color:#333;letter-spacing:0.009px;-webkit-text-stroke:0.25px #333;width:112.20px;overflow:hidden">03-08-2021 14:20</div>
<div class="x" style="left:590.80px;top:386px;font-size:11px;font-weight:normal;color:#333;letter-spacing:-0.100px;-webkit-text-stroke:0.25px #333;transform:scaleX(0.94);transform-origin:0 0;width:120.43px;overflow:hidden">EDI_LHL</div>
<div class="x" style="left:708.80px;top:386px;font-size:11px;font-weight:normal;color:#333;letter-spacing:-0.280px;-webkit-text-stroke:0.25px #333;transform:scaleX(0.94);transform-origin:0 0;width:119.36px;overflow:hidden">EVERGREEN SHIPPI...</div>
<div class="x" style="left:825.80px;top:386px;font-size:11px;font-weight:normal;color:#333;letter-spacing:0.052px;-webkit-text-stroke:0.25px #333;transform:scaleX(0.94);transform-origin:0 0;width:119.36px;overflow:hidden">OCEAN NETWORKA...</div>
<div class="x" style="left:942.80px;top:386px;font-size:11px;font-weight:normal;color:#333;letter-spacing:-0.417px;-webkit-text-stroke:0.25px #333;width:111.20px;overflow:hidden">LOHAN LOGISTICS CO</div>
<div class="x" style="left:121.80px;top:415px;font-size:11px;font-weight:bold;color:#508ac9;letter-spacing:0.073px;width:112.20px;overflow:hidden">OIM-1026908</div>
<div class="x" style="left:238.80px;top:415px;font-size:11px;font-weight:normal;color:#333;letter-spacing:0.004px;-webkit-text-stroke:0.25px #333;width:113.20px;overflow:hidden">MEDUQ4621130</div>
<div class="x" style="left:356.80px;top:415px;font-size:11px;font-weight:normal;color:#333;letter-spacing:-0.068px;-webkit-text-stroke:0.25px #333;width:112.20px;overflow:hidden">UCMISH2105039</div>
<div class="x" style="left:473.80px;top:415px;font-size:11px;font-weight:normal;color:#333;letter-spacing:0.009px;-webkit-text-stroke:0.25px #333;width:112.20px;overflow:hidden">03-08-2021 14:20</div>
<div class="x" style="left:590.80px;top:415px;font-size:11px;font-weight:normal;color:#333;letter-spacing:-0.100px;-webkit-text-stroke:0.25px #333;transform:scaleX(0.94);transform-origin:0 0;width:120.43px;overflow:hidden">EDI_LHL</div>
<div class="x" style="left:708.80px;top:415px;font-size:11px;font-weight:normal;color:#333;letter-spacing:-0.280px;-webkit-text-stroke:0.25px #333;transform:scaleX(0.94);transform-origin:0 0;width:119.36px;overflow:hidden">EVERGREEN SHIPPI...</div>
<div class="x" style="left:825.80px;top:415px;font-size:11px;font-weight:normal;color:#333;letter-spacing:0.052px;-webkit-text-stroke:0.25px #333;transform:scaleX(0.94);transform-origin:0 0;width:119.36px;overflow:hidden">OCEAN NETWORKA...</div>
<div class="x" style="left:942.80px;top:415px;font-size:11px;font-weight:normal;color:#333;letter-spacing:-0.417px;-webkit-text-stroke:0.25px #333;width:111.20px;overflow:hidden">LOHAN LOGISTICS CO</div>
<div class="x" style="left:121.80px;top:444px;font-size:11px;font-weight:bold;color:#508ac9;letter-spacing:0.073px;width:112.20px;overflow:hidden">OIM-1026908</div>
<div class="x" style="left:238.80px;top:444px;font-size:11px;font-weight:normal;color:#333;letter-spacing:0.004px;-webkit-text-stroke:0.25px #333;width:113.20px;overflow:hidden">MEDUQ4621130</div>
<div class="x" style="left:356.80px;top:444px;font-size:11px;font-weight:normal;color:#333;letter-spacing:-0.068px;-webkit-text-stroke:0.25px #333;width:112.20px;overflow:hidden">UCMISH2105039</div>
<div class="x" style="left:473.80px;top:444px;font-size:11px;font-weight:normal;color:#333;letter-spacing:0.009px;-webkit-text-stroke:0.25px #333;width:112.20px;overflow:hidden">03-08-2021 14:20</div>
<div class="x" style="left:590.80px;top:444px;font-size:11px;font-weight:normal;color:#333;letter-spacing:-0.100px;-webkit-text-stroke:0.25px #333;transform:scaleX(0.94);transform-origin:0 0;width:120.43px;overflow:hidden">EDI_LHL</div>
<div class="x" style="left:708.80px;top:444px;font-size:11px;font-weight:normal;color:#333;letter-spacing:-0.280px;-webkit-text-stroke:0.25px #333;transform:scaleX(0.94);transform-origin:0 0;width:119.36px;overflow:hidden">EVERGREEN SHIPPI...</div>
<div class="x" style="left:825.80px;top:444px;font-size:11px;font-weight:normal;color:#333;letter-spacing:0.052px;-webkit-text-stroke:0.25px #333;transform:scaleX(0.94);transform-origin:0 0;width:119.36px;overflow:hidden">OCEAN NETWORKA...</div>
<div class="x" style="left:942.80px;top:444px;font-size:11px;font-weight:normal;color:#333;letter-spacing:-0.417px;-webkit-text-stroke:0.25px #333;width:111.20px;overflow:hidden">LOHAN LOGISTICS CO</div>
<div class="x" style="left:121.80px;top:473px;font-size:11px;font-weight:bold;color:#508ac9;letter-spacing:0.073px;width:112.20px;overflow:hidden">OIM-1026908</div>
<div class="x" style="left:238.80px;top:473px;font-size:11px;font-weight:normal;color:#333;letter-spacing:0.004px;-webkit-text-stroke:0.25px #333;width:113.20px;overflow:hidden">MEDUQ4621130</div>
<div class="x" style="left:356.80px;top:473px;font-size:11px;font-weight:normal;color:#333;letter-spacing:-0.068px;-webkit-text-stroke:0.25px #333;width:112.20px;overflow:hidden">UCMISH2105039</div>
<div class="x" style="left:473.80px;top:473px;font-size:11px;font-weight:normal;color:#333;letter-spacing:0.009px;-webkit-text-stroke:0.25px #333;width:112.20px;overflow:hidden">03-08-2021 14:20</div>
<div class="x" style="left:590.80px;top:473px;font-size:11px;font-weight:normal;color:#333;letter-spacing:-0.100px;-webkit-text-stroke:0.25px #333;transform:scaleX(0.94);transform-origin:0 0;width:120.43px;overflow:hidden">EDI_LHL</div>
<div class="x" style="left:708.80px;top:473px;font-size:11px;font-weight:normal;color:#333;letter-spacing:-0.280px;-webkit-text-stroke:0.25px #333;transform:scaleX(0.94);transform-origin:0 0;width:119.36px;overflow:hidden">EVERGREEN SHIPPI...</div>
<div class="x" style="left:825.80px;top:473px;font-size:11px;font-weight:normal;color:#333;letter-spacing:0.052px;-webkit-text-stroke:0.25px #333;transform:scaleX(0.94);transform-origin:0 0;width:119.36px;overflow:hidden">OCEAN NETWORKA...</div>
<div class="x" style="left:942.80px;top:473px;font-size:11px;font-weight:normal;color:#333;letter-spacing:-0.417px;-webkit-text-stroke:0.25px #333;width:111.20px;overflow:hidden">LOHAN LOGISTICS CO</div>
<div class="x" style="left:121.80px;top:502px;font-size:11px;font-weight:bold;color:#508ac9;letter-spacing:0.073px;width:112.20px;overflow:hidden">OIM-1026908</div>
<div class="x" style="left:238.80px;top:502px;font-size:11px;font-weight:normal;color:#333;letter-spacing:0.004px;-webkit-text-stroke:0.25px #333;width:113.20px;overflow:hidden">MEDUQ4621130</div>
<div class="x" style="left:356.80px;top:502px;font-size:11px;font-weight:normal;color:#333;letter-spacing:-0.068px;-webkit-text-stroke:0.25px #333;width:112.20px;overflow:hidden">UCMISH2105039</div>
<div class="x" style="left:473.80px;top:502px;font-size:11px;font-weight:normal;color:#333;letter-spacing:0.009px;-webkit-text-stroke:0.25px #333;width:112.20px;overflow:hidden">03-08-2021 14:20</div>
<div class="x" style="left:590.80px;top:502px;font-size:11px;font-weight:normal;color:#333;letter-spacing:-0.100px;-webkit-text-stroke:0.25px #333;transform:scaleX(0.94);transform-origin:0 0;width:120.43px;overflow:hidden">EDI_LHL</div>
<div class="x" style="left:708.80px;top:502px;font-size:11px;font-weight:normal;color:#333;letter-spacing:-0.280px;-webkit-text-stroke:0.25px #333;transform:scaleX(0.94);transform-origin:0 0;width:119.36px;overflow:hidden">EVERGREEN SHIPPI...</div>
<div class="x" style="left:825.80px;top:502px;font-size:11px;font-weight:normal;color:#333;letter-spacing:0.052px;-webkit-text-stroke:0.25px #333;transform:scaleX(0.94);transform-origin:0 0;width:119.36px;overflow:hidden">OCEAN NETWORKA...</div>
<div class="x" style="left:942.80px;top:502px;font-size:11px;font-weight:normal;color:#333;letter-spacing:-0.417px;-webkit-text-stroke:0.25px #333;width:111.20px;overflow:hidden">LOHAN LOGISTICS CO</div>
<div class="x" style="left:121.80px;top:531px;font-size:11px;font-weight:bold;color:#508ac9;letter-spacing:0.073px;width:112.20px;overflow:hidden">OIM-1026908</div>
<div class="x" style="left:238.80px;top:531px;font-size:11px;font-weight:normal;color:#333;letter-spacing:0.004px;-webkit-text-stroke:0.25px #333;width:113.20px;overflow:hidden">MEDUQ4621130</div>
<div class="x" style="left:356.80px;top:531px;font-size:11px;font-weight:normal;color:#333;letter-spacing:-0.068px;-webkit-text-stroke:0.25px #333;width:112.20px;overflow:hidden">UCMISH2105039</div>
<div class="x" style="left:473.80px;top:531px;font-size:11px;font-weight:normal;color:#333;letter-spacing:0.009px;-webkit-text-stroke:0.25px #333;width:112.20px;overflow:hidden">03-08-2021 14:20</div>
<div class="x" style="left:590.80px;top:531px;font-size:11px;font-weight:normal;color:#333;letter-spacing:-0.100px;-webkit-text-stroke:0.25px #333;transform:scaleX(0.94);transform-origin:0 0;width:120.43px;overflow:hidden">EDI_LHL</div>
<div class="x" style="left:708.80px;top:531px;font-size:11px;font-weight:normal;color:#333;letter-spacing:-0.280px;-webkit-text-stroke:0.25px #333;transform:scaleX(0.94);transform-origin:0 0;width:119.36px;overflow:hidden">EVERGREEN SHIPPI...</div>
<div class="x" style="left:825.80px;top:531px;font-size:11px;font-weight:normal;color:#333;letter-spacing:0.052px;-webkit-text-stroke:0.25px #333;transform:scaleX(0.94);transform-origin:0 0;width:119.36px;overflow:hidden">OCEAN NETWORKA...</div>
<div class="x" style="left:942.80px;top:531px;font-size:11px;font-weight:normal;color:#333;letter-spacing:-0.417px;-webkit-text-stroke:0.25px #333;width:111.20px;overflow:hidden">LOHAN LOGISTICS CO</div>
<div class="x" style="left:121.80px;top:559px;font-size:11px;font-weight:bold;color:#508ac9;letter-spacing:0.073px;width:112.20px;overflow:hidden">OIM-1026908</div>
<div class="x" style="left:238.80px;top:559px;font-size:11px;font-weight:normal;color:#333;letter-spacing:0.004px;-webkit-text-stroke:0.25px #333;width:113.20px;overflow:hidden">MEDUQ4621130</div>
<div class="x" style="left:356.80px;top:559px;font-size:11px;font-weight:normal;color:#333;letter-spacing:-0.068px;-webkit-text-stroke:0.25px #333;width:112.20px;overflow:hidden">UCMISH2105039</div>
<div class="x" style="left:473.80px;top:559px;font-size:11px;font-weight:normal;color:#333;letter-spacing:0.009px;-webkit-text-stroke:0.25px #333;width:112.20px;overflow:hidden">03-08-2021 14:20</div>
<div class="x" style="left:590.80px;top:559px;font-size:11px;font-weight:normal;color:#333;letter-spacing:-0.100px;-webkit-text-stroke:0.25px #333;transform:scaleX(0.94);transform-origin:0 0;width:120.43px;overflow:hidden">EDI_LHL</div>
<div class="x" style="left:708.80px;top:559px;font-size:11px;font-weight:normal;color:#333;letter-spacing:-0.280px;-webkit-text-stroke:0.25px #333;transform:scaleX(0.94);transform-origin:0 0;width:119.36px;overflow:hidden">EVERGREEN SHIPPI...</div>
<div class="x" style="left:825.80px;top:559px;font-size:11px;font-weight:normal;color:#333;letter-spacing:0.052px;-webkit-text-stroke:0.25px #333;transform:scaleX(0.94);transform-origin:0 0;width:119.36px;overflow:hidden">OCEAN NETWORKA...</div>
<div class="x" style="left:942.80px;top:559px;font-size:11px;font-weight:normal;color:#333;letter-spacing:-0.417px;-webkit-text-stroke:0.25px #333;width:111.20px;overflow:hidden">LOHAN LOGISTICS CO</div>
<div class="x" style="left:121.80px;top:588px;font-size:11px;font-weight:bold;color:#508ac9;letter-spacing:0.073px;width:112.20px;overflow:hidden">OIM-1026908</div>
<div class="x" style="left:238.80px;top:588px;font-size:11px;font-weight:normal;color:#333;letter-spacing:0.004px;-webkit-text-stroke:0.25px #333;width:113.20px;overflow:hidden">MEDUQ4621130</div>
<div class="x" style="left:356.80px;top:588px;font-size:11px;font-weight:normal;color:#333;letter-spacing:-0.068px;-webkit-text-stroke:0.25px #333;width:112.20px;overflow:hidden">UCMISH2105039</div>
<div class="x" style="left:473.80px;top:588px;font-size:11px;font-weight:normal;color:#333;letter-spacing:0.009px;-webkit-text-stroke:0.25px #333;width:112.20px;overflow:hidden">03-08-2021 14:20</div>
<div class="x" style="left:590.80px;top:588px;font-size:11px;font-weight:normal;color:#333;letter-spacing:-0.100px;-webkit-text-stroke:0.25px #333;transform:scaleX(0.94);transform-origin:0 0;width:120.43px;overflow:hidden">EDI_LHL</div>
<div class="x" style="left:708.80px;top:588px;font-size:11px;font-weight:normal;color:#333;letter-spacing:-0.280px;-webkit-text-stroke:0.25px #333;transform:scaleX(0.94);transform-origin:0 0;width:119.36px;overflow:hidden">EVERGREEN SHIPPI...</div>
<div class="x" style="left:825.80px;top:588px;font-size:11px;font-weight:normal;color:#333;letter-spacing:0.052px;-webkit-text-stroke:0.25px #333;transform:scaleX(0.94);transform-origin:0 0;width:119.36px;overflow:hidden">OCEAN NETWORKA...</div>
<div class="x" style="left:942.80px;top:588px;font-size:11px;font-weight:normal;color:#333;letter-spacing:-0.417px;-webkit-text-stroke:0.25px #333;width:111.20px;overflow:hidden">LOHAN LOGISTICS CO</div>
<div class="x" style="left:121.80px;top:617px;font-size:11px;font-weight:bold;color:#508ac9;letter-spacing:0.073px;width:112.20px;overflow:hidden">OIM-1026908</div>
<div class="x" style="left:238.80px;top:617px;font-size:11px;font-weight:normal;color:#333;letter-spacing:0.004px;-webkit-text-stroke:0.25px #333;width:113.20px;overflow:hidden">MEDUQ4621130</div>
<div class="x" style="left:356.80px;top:617px;font-size:11px;font-weight:normal;color:#333;letter-spacing:-0.068px;-webkit-text-stroke:0.25px #333;width:112.20px;overflow:hidden">UCMISH2105039</div>
<div class="x" style="left:473.80px;top:617px;font-size:11px;font-weight:normal;color:#333;letter-spacing:0.009px;-webkit-text-stroke:0.25px #333;width:112.20px;overflow:hidden">03-08-2021 14:20</div>
<div class="x" style="left:590.80px;top:617px;font-size:11px;font-weight:normal;color:#333;letter-spacing:-0.100px;-webkit-text-stroke:0.25px #333;transform:scaleX(0.94);transform-origin:0 0;width:120.43px;overflow:hidden">EDI_LHL</div>
<div class="x" style="left:708.80px;top:617px;font-size:11px;font-weight:normal;color:#333;letter-spacing:-0.280px;-webkit-text-stroke:0.25px #333;transform:scaleX(0.94);transform-origin:0 0;width:119.36px;overflow:hidden">EVERGREEN SHIPPI...</div>
<div class="x" style="left:825.80px;top:617px;font-size:11px;font-weight:normal;color:#333;letter-spacing:0.052px;-webkit-text-stroke:0.25px #333;transform:scaleX(0.94);transform-origin:0 0;width:119.36px;overflow:hidden">OCEAN NETWORKA...</div>
<div class="x" style="left:942.80px;top:617px;font-size:11px;font-weight:normal;color:#333;letter-spacing:-0.417px;-webkit-text-stroke:0.25px #333;width:111.20px;overflow:hidden">LOHAN LOGISTICS CO</div>
<div class="x" style="left:391.00px;top:667px;font-size:10.5px;font-weight:normal;color:#555;letter-spacing:-0.866px;-webkit-text-stroke:0.25px #555">100</div>
<div class="x" style="left:441.00px;top:666px;font-size:12.5px;font-weight:normal;color:#444;letter-spacing:-0.081px;-webkit-text-stroke:0.25px #444">records</div>
</body></html>
